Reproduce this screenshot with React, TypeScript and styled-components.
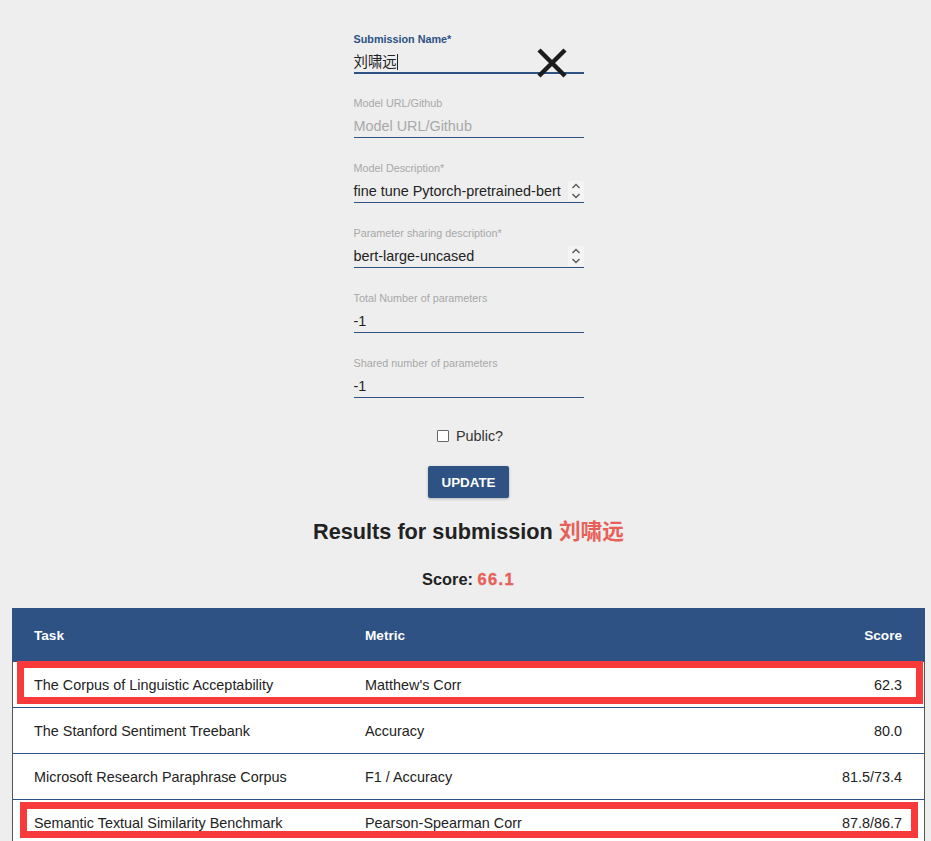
import React from 'react'
import styled, { createGlobalStyle } from 'styled-components'

const GlobalStyle = createGlobalStyle`
  body {
    margin: 0;
    background: #eeeeee;
    font-family: 'Liberation Sans', Arial, 'Noto Sans CJK SC', sans-serif;
    color: #222;
  }
  * {
    box-sizing: border-box;
  }
`

const blue = '#2d5283'
const coral = '#e8605a'

interface Result {
  task: string
  metric: string
  score: string
  mark?: { top: number; left: number; right: number; bottom: number }
}

const results: Result[] = [
  {
    task: 'The Corpus of Linguistic Acceptability',
    metric: "Matthew's Corr",
    score: '62.3',
    mark: { top: -1, left: 5, right: 2, bottom: 3 },
  },
  { task: 'The Stanford Sentiment Treebank', metric: 'Accuracy', score: '80.0' },
  {
    task: 'Microsoft Research Paraphrase Corpus',
    metric: 'F1 / Accuracy',
    score: '81.5/73.4',
  },
  {
    task: 'Semantic Textual Similarity Benchmark',
    metric: 'Pearson-Spearman Corr',
    score: '87.8/86.7',
    mark: { top: 2, left: 8, right: 7, bottom: 7 },
  },
]

const UpDown = () => (
  <Arrows viewBox="0 0 16 20" width="16" height="20">
    <path d="M4.5 7 L8 3.5 L11.5 7" fill="none" stroke="#555" strokeWidth="1.3" />
    <path d="M4.5 13 L8 16.5 L11.5 13" fill="none" stroke="#555" strokeWidth="1.3" />
  </Arrows>
)

const App: React.FC = () => {
  return (
    <Page>
      <GlobalStyle />
      <Form>
        <Field>
          <Label focused>Submission Name*</Label>
          <InputLine focused>
            <Value>刘啸远</Value>
            <Caret />
          </InputLine>
          <Cross viewBox="0 0 32 32" width="32" height="32">
            <path d="M3 3 L29 29 M29 3 L3 29" stroke="#1c1c1c" strokeWidth="4.5" />
          </Cross>
        </Field>
        <Field>
          <Label>Model URL/Github</Label>
          <InputLine>
            <Value placeholder>Model URL/Github</Value>
          </InputLine>
        </Field>
        <Field>
          <Label>Model Description*</Label>
          <InputLine>
            <Value>fine tune Pytorch-pretrained-bert</Value>
            <UpDown />
          </InputLine>
        </Field>
        <Field>
          <Label>Parameter sharing description*</Label>
          <InputLine>
            <Value>bert-large-uncased</Value>
            <UpDown />
          </InputLine>
        </Field>
        <Field>
          <Label>Total Number of parameters</Label>
          <InputLine>
            <Value>-1</Value>
          </InputLine>
        </Field>
        <Field>
          <Label>Shared number of parameters</Label>
          <InputLine>
            <Value>-1</Value>
          </InputLine>
        </Field>
      </Form>

      <CheckRow>
        <CheckBox />
        <span>Public?</span>
      </CheckRow>

      <UpdateButton>UPDATE</UpdateButton>

      <Title>
        Results for submission <Accent>刘啸远</Accent>
      </Title>

      <ScoreLine>
        Score: <ScoreValue>66.1</ScoreValue>
      </ScoreLine>

      <Table>
        <HeaderRow>
          <span>Task</span>
          <span>Metric</span>
          <ScoreCell>Score</ScoreCell>
        </HeaderRow>
        {results.map((r) => (
          <Row key={r.task}>
            <span>{r.task}</span>
            <span>{r.metric}</span>
            <ScoreCell>{r.score}</ScoreCell>
            {r.mark && <Mark {...r.mark} />}
          </Row>
        ))}
      </Table>
    </Page>
  )
}

const Page = styled.div`
  padding: 0 6px 20px 12px;
  display: flex;
  flex-direction: column;
  align-items: center;
`

const Form = styled.div`
  width: 230px;
  padding-top: 33px;
  display: flex;
  flex-direction: column;
  gap: 24px;
`

const Field = styled.div`
  position: relative;
  display: flex;
  flex-direction: column;
  gap: 4px;
`

const Label = styled.label<{ focused?: boolean }>`
  font-size: 10.8px;
  line-height: 13px;
  font-weight: ${({ focused }) => (focused ? 700 : 400)};
  color: ${({ focused }) => (focused ? blue : '#a8a8a8')};
`

const InputLine = styled.div<{ focused?: boolean }>`
  display: flex;
  align-items: center;
  justify-content: space-between;
  height: 24px;
  padding-top: 1px;
  border-bottom: ${({ focused }) => (focused ? '2px' : '1px')} solid ${blue};
  margin-bottom: ${({ focused }) => (focused ? '-1px' : '0')};
`

const Value = styled.span<{ placeholder?: boolean }>`
  font-size: 14.4px;
  line-height: 16px;
  white-space: nowrap;
  color: ${({ placeholder }) => (placeholder ? '#a9a9a9' : '#222')};
`

const Caret = styled.span`
  width: 1px;
  height: 16px;
  background: #222;
  margin-right: auto;
`

const Arrows = styled.svg`
  flex-shrink: 0;
  background: #f4f4f4;
`

const Cross = styled.svg`
  position: absolute;
  left: 182px;
  top: 14px;
`

const CheckRow = styled.div`
  margin-top: 30px;
  display: flex;
  align-items: center;
  gap: 7px;
  font-size: 14.4px;
  line-height: 16px;
  color: #333;
  padding-left: 3px;
`

const CheckBox = styled.span`
  width: 12px;
  height: 12px;
  border: 1px solid #666;
  background: #fff;
  border-radius: 1px;
`

const UpdateButton = styled.button`
  margin-top: 22px;
  width: 81px;
  height: 32px;
  border: none;
  border-radius: 2px;
  background: ${blue};
  color: #fff;
  font-family: inherit;
  font-weight: 700;
  font-size: 13.4px;
  box-shadow: 0 1px 3px rgba(0, 0, 0, 0.25);
`

const Title = styled.h2`
  margin: 22px 0 0;
  font-size: 21.7px;
  line-height: 24px;
  font-weight: 700;
  color: #222;
`

const Accent = styled.span`
  color: ${coral};
`

const ScoreLine = styled.div`
  margin-top: 26px;
  font-size: 16.4px;
  line-height: 18px;
  font-weight: 700;
  color: #222;
`

const ScoreValue = styled.span`
  color: ${coral};
  font-weight: 900;
  letter-spacing: 1.4px;
  -webkit-text-stroke: 0.4px ${coral};
`

const Table = styled.div`
  margin-top: 20px;
  align-self: stretch;
  display: flex;
  flex-direction: column;
`

const RowBase = styled.div`
  display: grid;
  grid-template-columns: 331px 1fr auto;
  align-items: center;
  padding: 0 23px 0 22px;
`

const HeaderRow = styled(RowBase)`
  height: 54px;
  background: ${blue};
  color: #fff;
  font-size: 13.6px;
  font-weight: 700;
`

const Row = styled(RowBase)`
  position: relative;
  height: 46px;
  background: #fff;
  font-size: 14.4px;
  color: #222;
  border-left: 1px solid #555;
  border-right: 1px solid #555;
  border-bottom: 1px solid ${blue};
  padding-left: 21px;
  padding-right: 22px;
`

const ScoreCell = styled.span`
  text-align: right;
`

const Mark = styled.div<{ top: number; left: number; right: number; bottom: number }>`
  position: absolute;
  top: ${({ top }) => top}px;
  left: ${({ left }) => left - 1}px;
  right: ${({ right }) => right - 1}px;
  bottom: ${({ bottom }) => bottom}px;
  border: 7px solid #f83a3a;
  pointer-events: none;
`

export default App
